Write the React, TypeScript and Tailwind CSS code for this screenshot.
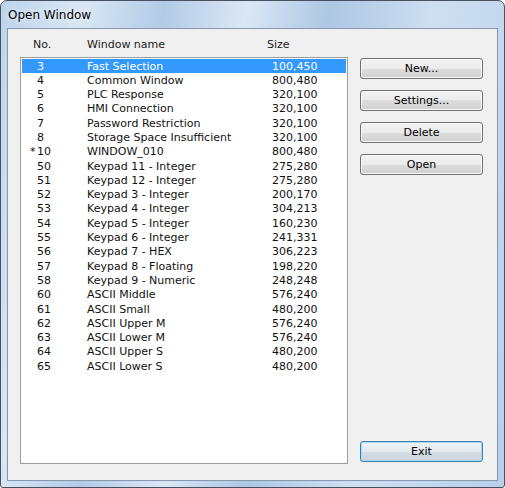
import React from "react";

const rows: [string, string, string][] = [
  ["3", "Fast Selection", "100,450"],
  ["4", "Common Window", "800,480"],
  ["5", "PLC Response", "320,100"],
  ["6", "HMI Connection", "320,100"],
  ["7", "Password Restriction", "320,100"],
  ["8", "Storage Space Insufficient", "320,100"],
  ["*10", "WINDOW_010", "800,480"],
  ["50", "Keypad 11 - Integer", "275,280"],
  ["51", "Keypad 12 - Integer", "275,280"],
  ["52", "Keypad 3 - Integer", "200,170"],
  ["53", "Keypad 4 - Integer", "304,213"],
  ["54", "Keypad 5 - Integer", "160,230"],
  ["55", "Keypad 6 - Integer", "241,331"],
  ["56", "Keypad 7 - HEX", "306,223"],
  ["57", "Keypad 8 - Floating", "198,220"],
  ["58", "Keypad 9 - Numeric", "248,248"],
  ["60", "ASCII Middle", "576,240"],
  ["61", "ASCII Small", "480,200"],
  ["62", "ASCII Upper M", "576,240"],
  ["63", "ASCII Lower M", "576,240"],
  ["64", "ASCII Upper S", "480,200"],
  ["65", "ASCII Lower S", "480,200"],
];

function Btn({ label, def }: { label: string; def?: boolean }) {
  return (
    <div
      className={
        def
          ? "h-[21px] w-[123px] rounded-[3px] border border-[#3c7fb1] shadow-[inset_0_0_0_1px_#a9d8f0] bg-[linear-gradient(#eef3f6_0%,#e2e9ee_50%,#d6dee5_50%,#cbd5dd_100%)] flex items-center justify-center text-[11px] leading-[13px] text-black"
          : "h-[21px] w-[123px] rounded-[3px] border border-[#707070] shadow-[inset_0_0_0_1px_#fbfbfb] bg-[linear-gradient(#f2f2f2_0%,#ebebeb_50%,#dddddd_50%,#cfcfcf_100%)] flex items-center justify-center text-[11px] leading-[13px] text-black"
      }
    >
      {label}
    </div>
  );
}

export default function App() {
  return (
    <div
      className="w-[505px] h-[488px] flex flex-col border border-[#46505e] rounded-t-[7px] rounded-b-[3px] overflow-hidden bg-[linear-gradient(100deg,#bdd4ec_0%,#d9e6f4_14%,#b3cbe7_28%,#dbe7f5_42%,#adc7e4_56%,#cfdff1_74%,#b8d0ea_100%)]"
      style={{ fontFamily: '"DejaVu Sans", Tahoma, sans-serif' }}
    >
      <div className="h-[27px] shrink-0 pl-[7px] pt-[7px] text-[12px] leading-[14px] text-black [text-shadow:0_0_6px_#ffffff]">
        Open Window
      </div>
      <div className="flex-1 px-[6px] pb-[6px] flex">
        <div className="flex-1 border border-[#8397b0] bg-[#f0f0f0] flex flex-col">
          <div className="h-[28px] shrink-0 pt-[9px] pl-[25px] flex text-[11px] leading-[14px] text-[#1a1a1a]">
            <span className="w-[54px]">No.</span>
            <span className="w-[180px]">Window name</span>
            <span>Size</span>
          </div>
          <div className="flex pl-[12px] gap-[12px]">
            <div className="w-[328px] h-[407px] border border-[#9c9c9c] bg-white p-[1px] text-[11px]">
              {rows.map(([no, name, size], i) => {
                const sel = i === 0;
                const star = no.startsWith("*");
                return (
                  <div
                    key={i}
                    className={
                      sel
                        ? "h-[14.3px] pt-[1.5px] leading-[12.8px] flex bg-[#3399ff] text-white whitespace-nowrap"
                        : "h-[14.3px] pt-[1.5px] leading-[12.8px] flex text-[#111] whitespace-nowrap"
                    }
                  >
                    <span className="w-[65px] pl-[15px]">
                      {star && <span className="inline-block w-[7px] -ml-[7px]">*</span>}
                      {star ? no.slice(1) : no}
                    </span>
                    <span className="w-[185px]">{name}</span>
                    <span>{size}</span>
                  </div>
                );
              })}
            </div>
            <div className="w-[123px] h-[407px] flex flex-col pt-[1px] pb-[2px]">
              <div className="flex flex-col gap-[11px]">
                <Btn label="New..." />
                <Btn label="Settings..." />
                <Btn label="Delete" />
                <Btn label="Open" />
              </div>
              <div className="flex-1" />
              <Btn label="Exit" def />
            </div>
          </div>
        </div>
      </div>
    </div>
  );
}
